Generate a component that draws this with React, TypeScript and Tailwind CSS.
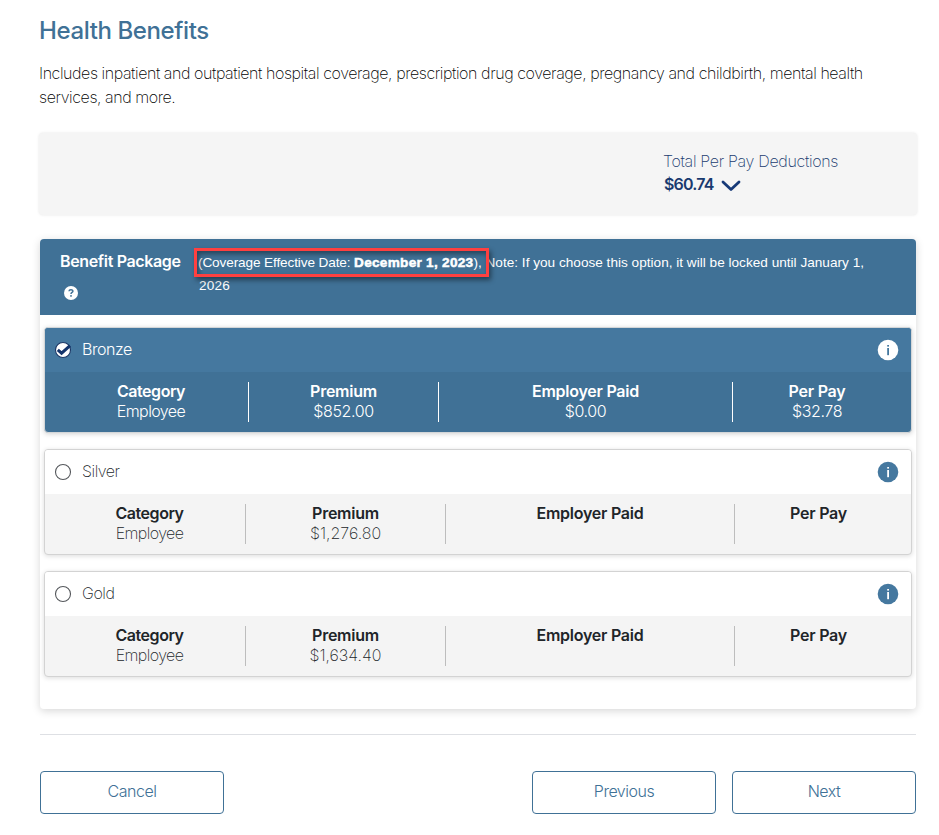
import React from "react";

type Cell = { label: string; value: string };
type Plan = { name: string; selected: boolean; cols: string; cells: Cell[] };

const plans: Plan[] = [
  {
    name: "Bronze",
    selected: true,
    cols: "grid-cols-[195px_190px_294px_168px]",
    cells: [
      { label: "Category", value: "Employee" },
      { label: "Premium", value: "$852.00" },
      { label: "Employer Paid", value: "$0.00" },
      { label: "Per Pay", value: "$32.78" },
    ],
  },
  {
    name: "Silver",
    selected: false,
    cols: "grid-cols-[192px_200px_289px_167px]",
    cells: [
      { label: "Category", value: "Employee" },
      { label: "Premium", value: "$1,276.80" },
      { label: "Employer Paid", value: "" },
      { label: "Per Pay", value: "" },
    ],
  },
  {
    name: "Gold",
    selected: false,
    cols: "grid-cols-[192px_200px_289px_167px]",
    cells: [
      { label: "Category", value: "Employee" },
      { label: "Premium", value: "$1,634.40" },
      { label: "Employer Paid", value: "" },
      { label: "Per Pay", value: "" },
    ],
  },
];

function InfoIcon({ selected }: { selected: boolean }) {
  const bg = selected ? "#ffffff" : "#45789f";
  const fg = selected ? "#45789f" : "#ffffff";
  return (
    <svg width="22" height="22" viewBox="0 0 22 22">
      <circle cx="11" cy="11" r="10.3" fill={bg} />
      <rect x="10.2" y="6" width="1.8" height="1.6" fill={fg} />
      <rect x="10.2" y="9" width="1.8" height="7.2" fill={fg} />
    </svg>
  );
}

function Radio({ selected }: { selected: boolean }) {
  return selected ? (
    <svg width="18" height="18" viewBox="0 0 18 18">
      <circle cx="9" cy="9" r="7.5" fill="#fff" stroke="#1d3866" strokeWidth="1.1" />
      <path d="M3.8 8.8 7.6 12.2 16 4.6" fill="none" stroke="#14346b" strokeWidth="3" />
    </svg>
  ) : (
    <svg width="18" height="18" viewBox="0 0 18 18">
      <circle cx="9" cy="9" r="7.5" fill="#fff" stroke="#55585c" strokeWidth="1.1" />
    </svg>
  );
}

function PlanCard({ plan }: { plan: Plan }) {
  const s = plan.selected;
  return (
    <div
      className={
        s
          ? "h-[106px] overflow-hidden rounded border border-[#d3d6d8] bg-[#407196] font-light text-white shadow-[0_1px_5px_rgba(0,0,0,0.18)]"
          : "h-[106px] overflow-hidden rounded border border-[#d3d3d3] bg-[#f4f4f4] font-extralight text-[#212529] shadow-[0_1px_5px_rgba(0,0,0,0.14)]"
      }
    >
      <div
        className={
          s
            ? "flex h-11 items-center bg-[#45789f] pl-[9px] pr-3"
            : "flex h-11 items-center bg-white pl-[9px] pr-3"
        }
      >
        <Radio selected={s} />
        <span className="ml-2.5 flex-1 pb-0.5 text-base leading-5 tracking-[-0.45px]">{plan.name}</span>
        <InfoIcon selected={s} />
      </div>
      <div className={`grid h-[60px] pl-[9px] pt-[10px] ${plan.cols}`}>
        {plan.cells.map((c, i) => (
          <div
            key={c.label}
            className={`h-10 text-center text-base leading-5 ${i < 3 ? "border-r" : ""} ${s ? "border-white" : "border-[#bdbdbd]"}`}
          >
            <div className={i === 0 ? "-mt-px font-semibold tracking-[-0.45px]" : "-mt-px font-semibold tracking-[-0.25px]"}>
              {c.label}
            </div>
            <div className={i === 0 ? "tracking-[-0.6px]" : s ? "tracking-[-0.4px]" : "tracking-[0px]"}>{c.value}</div>
          </div>
        ))}
      </div>
    </div>
  );
}

function FooterButton({ children }: { children: string }) {
  return (
    <button className="h-[43px] w-[184px] rounded border border-[#407196] pb-1 text-base font-light tracking-[-0.5px] text-[#407196]">
      {children}
    </button>
  );
}

export default function App() {
  return (
    <div className="h-[835px] w-[939px] overflow-hidden bg-white pl-10 pr-[23px] pt-[15px] font-['Inter','Liberation_Sans',sans-serif]">
      <h1 className="-ml-px text-2xl font-medium leading-8 tracking-[-0.4px] text-[#407196]">Health Benefits</h1>
      <p className="-ml-px mt-[14px] whitespace-nowrap text-base font-extralight leading-6 tracking-[-0.425px] text-black">
        Includes inpatient and outpatient hospital coverage, prescription drug coverage, pregnancy and childbirth, mental health
        <br />
        services, and more.
      </p>

      <div className="-ml-px mr-[-1px] mt-6 flex h-[82px] justify-end rounded bg-[#f5f5f5] shadow-[0_0_3px_rgba(0,0,0,0.1)]">
        <div className="w-[254px] whitespace-nowrap pt-4 text-[#193a6f]">
          <div className="text-base font-extralight leading-6 tracking-[-0.32px]">Total Per Pay Deductions</div>
          <div className="flex items-center text-base font-semibold leading-[23px]">
            <span className="ml-px w-[57px] tracking-[-0.8px]">$60.74</span>
            <svg width="20" height="14" viewBox="0 0 20 14" fill="none" className="mt-[3px]">
              <path d="M2 3 10 10.5 18 3" stroke="#173a78" strokeWidth="2.8" strokeLinecap="round" strokeLinejoin="round" />
            </svg>
          </div>
        </div>
      </div>

      <section className="mt-6 h-[470px] rounded bg-white shadow-[0_2px_8px_rgba(0,0,0,0.16)]">
        <header className="flex h-[76px] rounded-t bg-[#407196] pl-5 text-white">
          <div className="w-[139px] pt-2.5">
            <h2 className="whitespace-nowrap text-base font-semibold leading-6 tracking-[-0.35px]">Benefit Package</h2>
            <svg width="16" height="16" viewBox="0 0 16 16" className="ml-[3px] mt-3">
              <circle cx="8" cy="8" r="7" fill="#fff" />
              <path d="M6 6.3C6.1 4.2 9.9 4.2 9.9 6.2 9.9 7.6 8 7.4 8 8.9" fill="none" stroke="#407196" strokeWidth="1.5" />
              <rect x="7.2" y="10.1" width="1.6" height="1.6" fill="#407196" />
            </svg>
          </div>
          <p className="relative whitespace-nowrap pt-3 font-['Liberation_Sans',Arial,sans-serif] text-[13.6px] leading-[23px]">
            <span className="-ml-px tracking-[-0.12px]">(Coverage Effective Date: </span>
            <b className="tracking-[0.28px] [-webkit-text-stroke:0.5px_white]">December 1, 2023</b>
            <span>), </span>
            <span className="tracking-[0.01px]">Note: If you choose this option, it will be locked until January 1,</span>
            <br />
            <span className="tracking-[0.2px]">2026</span>
            <span className="absolute -left-[5px] top-[9px] h-[29px] w-[295px] border-3 border-[#ff4040] shadow-[2px_3px_5px_rgba(0,0,0,0.45),inset_2px_3px_5px_rgba(0,0,0,0.4)]" />
          </p>
        </header>
        <div className="flex flex-col gap-4 px-1 pt-3">
          {plans.map((p) => (
            <PlanCard key={p.name} plan={p} />
          ))}
        </div>
      </section>

      <hr className="mt-[25px] border-[#dee0e4]" />
      <footer className="mt-9 flex gap-4">
        <div className="flex-1">
          <FooterButton>Cancel</FooterButton>
        </div>
        <FooterButton>Previous</FooterButton>
        <FooterButton>Next</FooterButton>
      </footer>
    </div>
  );
}
